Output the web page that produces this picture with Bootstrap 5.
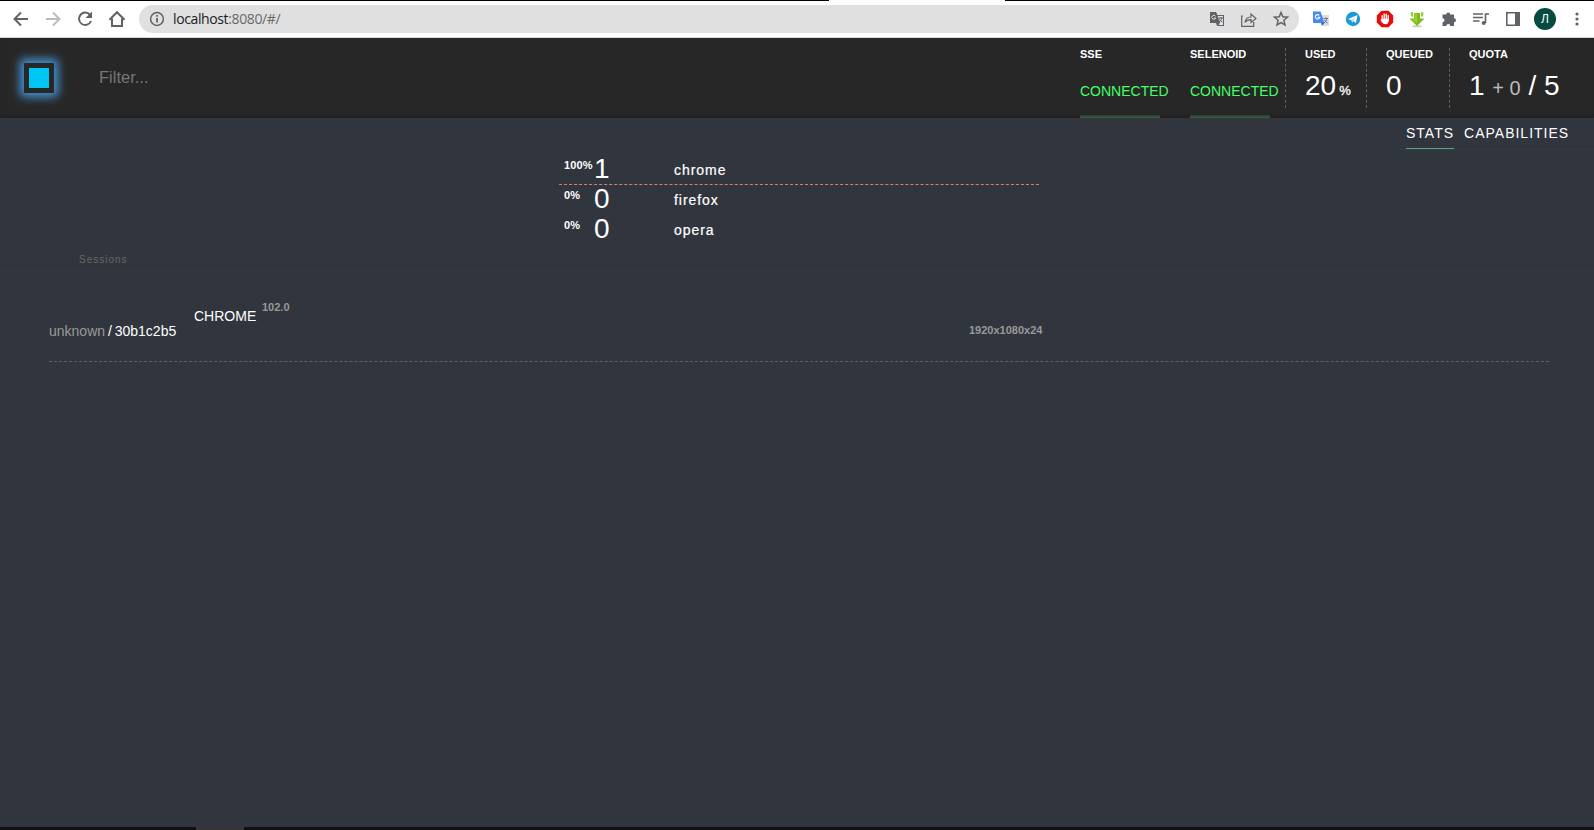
<!DOCTYPE html>
<html lang="en">
<head>
<meta charset="utf-8">
<title>Selenoid UI</title>
<link href="https://cdn.jsdelivr.net/npm/bootstrap@5.3.0/dist/css/bootstrap.min.css" rel="stylesheet">
<style>
body{height:830px;overflow:hidden;background:#31363e;color:#fff;font-family:"Liberation Sans",Arial,sans-serif;font-size:14px;line-height:1}
.tabstrip{height:1px;background:#000}
.tabstrip span{width:176px;height:1px;margin-left:829px;background:#fff}
.browserbar{height:37px;background:#fff;border-bottom:1px solid #d5d8da;color:#5f6368}
.browserbar svg{display:block;flex:none}
.navicons{width:139px;padding-left:12px;gap:14px}
.address{width:1160px;height:28px;background:#e0e0e0;padding:0 9px 0 9px}
.url{font-family:"Open Sans","Noto Sans",sans-serif;font-size:14px;letter-spacing:-.38px;margin-left:7px;color:#666a6e}
.url b{font-weight:400;color:#202124}
.exts{padding-left:13px;gap:14px}
.exts .tight{margin-left:-2px}
.topbar{height:80px;background:#272727;box-shadow:inset 0 -4px 4px -2px #202020}
.logo{width:30px;height:30px;margin-left:24px;border:5px solid #272727;background:#00c6f4;border-radius:1px;box-shadow:0 0 10px 4px #4596d8}
.filter{width:400px;margin:-2px 0 0 45px;padding:0;background:none;border:0;color:#fff;font-size:16.5px;line-height:20px}
.filter::placeholder{color:#777;opacity:1}
.cell{height:80px;padding-top:11px}
.cell h2{font-size:11px;line-height:11px;font-weight:700;margin:0}
.status{width:110px}
.status p{margin:23px 0 0;font-size:14px;line-height:16px;color:#4f6}
.status i{display:block;width:80px;height:3px;margin-top:16px;background:linear-gradient(#29402d,#3a6041)}
.figure-n{font-size:28px;line-height:32px;margin-top:10px;white-space:nowrap}
.percent{font-size:13px;margin-left:3px;-webkit-text-stroke:.3px #fff}
.pending{font-size:20px;color:#bbb}
.sep{height:60px;width:1px;margin-top:10px;border-left:1px dashed #5b6067}
.tabs{height:32px;border-bottom:1px solid #363b43;width:198px;padding-left:10px;gap:10px;letter-spacing:1px}
.tabs a{color:#fff;text-decoration:none;height:31px;line-height:31px;white-space:nowrap}
.tabs .on{border-bottom:1px solid #4fa87a}
.stats{width:480px;margin:5px 0 0 559px}
.stat{height:30px}
.stat small{width:30px;font-size:11px;line-height:11px;font-weight:700;margin:5px 0 0 5px;letter-spacing:.1px}
.stat span{width:80px;font-size:28px;line-height:28px}
.stat em{font-style:normal;letter-spacing:.95px;font-size:14px;line-height:31px;-webkit-text-stroke:.2px #fff}
.used{border-bottom:1px dashed #e57a6c}
.sessions{height:26px;padding:10px 0 0 79px;border-bottom:1px solid #363a42;color:#666;font-size:10px;line-height:10px;letter-spacing:1px}
.session{height:91px;width:1500px;margin-left:49px;border-bottom:1px dashed #5b6067}
.sid{width:145px;padding-top:53px;color:#999;word-spacing:-1px}
.sid b{font-weight:400;color:#fff}
.ver{font-size:11px;line-height:11px;font-weight:700;color:#999}
.taskbar{height:3px;background:#111}
.taskbar span{width:48px;height:3px;margin-left:196px;background:#363435}
</style>
</head>
<body class="d-flex flex-column">
<div class="tabstrip d-flex flex-shrink-0"><span></span></div>
<nav class="browserbar d-flex align-items-center flex-shrink-0">
  <div class="navicons d-flex align-items-center">
    <svg width="18" height="18" viewBox="0 0 18 18" fill="none" stroke="currentColor" stroke-width="2"><path d="M16 9H3M9 2.500 2.500 9 9 15.500"/></svg>
    <svg width="18" height="18" viewBox="0 0 18 18" fill="none" stroke="#b9bbbd" stroke-width="2"><path d="M2 9h13M9 2.500 15.500 9 9 15.500"/></svg>
    <svg width="18" height="18" viewBox="0 0 18 18" fill="none" stroke="currentColor" stroke-width="2"><path d="M14.300 5.200A6.200 6.200 0 1 0 15 11"/><path d="M16 1.500V8H9.500z" fill="currentColor" stroke="none"/></svg>
    <svg width="18" height="18" viewBox="0 0 18 18" fill="none" stroke="currentColor" stroke-width="2"><path d="M1.500 9.700 9 2.200l7.500 7.500M4 8.500V16h10V8.500"/></svg>
  </div>
  <div class="address rounded-pill d-flex align-items-center">
    <svg width="18" height="18" viewBox="0 0 18 18" fill="none" stroke="currentColor" stroke-width="1.500"><circle cx="9" cy="9" r="6.400"/><path d="M9 8v4.500M9 5v1.700" stroke-width="1.800"/></svg>
    <div class="url"><b>localhost</b>:8080/#/</div>
    <div class="d-flex ms-auto" style="gap:14px">
      <svg width="18" height="18" viewBox="0 0 18 18"><path d="M2 2h6l1.500 3H16v11H9l-1-3H2z" fill="#5f6368"/><path d="M9.700 6H15v9h-4.500l1.500-2.300z" fill="#e0e0e0"/><path d="M7.500 6.200A2 2 0 1 0 7.700 8H6" fill="none" stroke="#e0e0e0"/><path d="M10.500 8H15M12.800 7v1M14 8q-.8 2.500-3 4M11.500 9.500q1 1.800 3 2.500" fill="none" stroke="#5f6368"/></svg>
      <svg width="18" height="18" viewBox="0 0 18 18" fill="none" stroke="#5f6368" stroke-width="1.200"><path d="M3 6H1.700v10.300h12V12M5 12.500c.6-4 3-5.500 6-5.500V4l5 4.500-5 4v-2.800c-2.800 0-4.600.8-6 2.800z"/></svg>
      <svg width="18" height="18" viewBox="0 0 18 18" fill="none" stroke="#5f6368" stroke-width="1.500"><path d="m9 2.500 1.800 4.300 4.700.4-3.600 3.100 1.100 4.600L9 12.500l-4 2.400 1.100-4.600-3.600-3.100 4.700-.4z"/></svg>
    </div>
  </div>
  <div class="exts d-flex align-items-center">
    <svg width="18" height="18" viewBox="0 0 18 18"><path d="M7 5h10v11h-6z" fill="#ddd"/><path d="M1 1.500h7.500L12.500 13H2a1 1 0 0 1-1-1z" fill="#4688f4"/><path d="m9 13h3.500L10 16z" fill="#2f62c4"/><path d="M7.200 5.300A2.200 2.200 0 1 0 7.700 7.300H5.700" fill="none" stroke="#fff" stroke-width="1.200"/><path d="M11.500 8.500H16M13.700 7.500v1M15 8.500q-.8 3-3 4.500M12.500 10q1 2 3 3" fill="none" stroke="#678"/></svg>
    <svg width="18" height="18" viewBox="0 0 18 18"><circle cx="9" cy="9" r="7.200" fill="#1c9ad6"/><path d="m4 9 9.500-4-1.600 8-2.600-1.900L8 12.500l-.6-2.300z" fill="#fff"/><path d="m7.400 10.200 4-3.200-3 4z" fill="#8ac8e8"/></svg>
    <svg width="18" height="18" viewBox="0 0 18 18"><path d="M5.500.8h7l4.700 4.700v7l-4.700 4.700h-7L.8 12.500v-7z" fill="#e40d0d"/><path d="M6.200 10V5.700M8.200 9V4M10.200 9V4.200M12.200 10V5.500" stroke="#fff" stroke-width="1.300" stroke-linecap="round"/><path d="M5.500 8.800h7.300v2q-.5 3.500-3.300 3.500T4.500 10z" fill="#fff"/></svg>
    <svg width="18" height="18" viewBox="0 0 18 18"><ellipse cx="9" cy="16.300" rx="5" ry="1" fill="#ccc"/><path d="M6 3h6v5.500h4.500L9 16 1.500 8.500H6z" fill="#7fba1c"/><path d="M2.500 2.500 5 2v4.500H3zM15.500 2.500 13 2v4.500h2z" fill="#9aca3c"/><path d="M6.500 3.500H9v10l-5-4.500h2.500z" fill="#9bd02f"/></svg>
    <svg width="18" height="18" viewBox="0 0 18 18" fill="#5f6368"><path d="M2.500 4.500h3.700a2 2 0 1 1 4 0H14v3.700a2 2 0 1 1 0 4V16h-3.700a2 2 0 0 0-4 0H2.500v-3.700a2 2 0 0 0 0-4z"/></svg>
    <svg width="18" height="18" viewBox="0 0 18 18" fill="none" stroke="#5f6368" stroke-width="1.600"><path d="M1 4h10M1 7.500h10M1 11h6.500M13.500 13V4H17"/><circle cx="11.700" cy="13" r="2" fill="#5f6368" stroke="none"/></svg>
    <svg width="18" height="18" viewBox="0 0 18 18"><path d="M2 2h14v14H2zM3.600 3.600v10.800H11V3.600z" fill="#5f6368" fill-rule="evenodd"/></svg>
    <svg class="tight" width="22" height="22" viewBox="0 0 22 22"><circle cx="11" cy="11" r="11" fill="#064b40"/><text x="11" y="15" text-anchor="middle" font-family="Liberation Sans" font-size="12" fill="#fff">Л</text></svg>
    <svg class="tight" width="18" height="18" viewBox="0 0 18 18" fill="#5f6368"><circle cx="9" cy="4" r="1.600"/><circle cx="9" cy="9" r="1.600"/><circle cx="9" cy="14" r="1.600"/></svg>
  </div>
</nav>
<header class="topbar d-flex flex-shrink-0">
  <div class="d-flex align-items-center">
    <div class="logo"></div>
    <input class="filter" placeholder="Filter...">
  </div>
  <div class="d-flex ms-auto">
    <div class="cell status"><h2>SSE</h2><p>CONNECTED</p><i></i></div>
    <div class="cell status" style="width:95px"><h2>SELENOID</h2><p>CONNECTED</p><i></i></div>
    <div class="sep"></div>
    <div class="cell" style="width:80px;padding-left:19px"><h2>USED</h2><div class="figure-n">20<span class="percent">%</span></div></div>
    <div class="sep"></div>
    <div class="cell" style="width:82px;padding-left:19px"><h2>QUEUED</h2><div class="figure-n">0</div></div>
    <div class="sep"></div>
    <div class="cell" style="width:144px;padding-left:19px"><h2>QUOTA</h2><div class="figure-n">1 <span class="pending">+ 0</span> / 5</div></div>
  </div>
</header>
<main class="flex-grow-1">
  <div class="tabs d-flex ms-auto"><a class="on">STATS</a><a>CAPABILITIES</a></div>
  <div class="stats">
    <div class="stat used d-flex"><small>100%</small><span>1</span><em>chrome</em></div>
    <div class="stat d-flex"><small>0%</small><span>0</span><em>firefox</em></div>
    <div class="stat d-flex"><small>0%</small><span>0</span><em>opera</em></div>
  </div>
  <div class="sessions">Sessions</div>
  <div class="session d-flex">
    <div class="sid">unknown <b>/ 30b1c2b5</b></div>
    <div style="width:68px;padding-top:38px">CHROME</div>
    <div class="ver" style="width:707px;padding-top:31px">102.0</div>
    <div class="ver" style="padding-top:54px">1920x1080x24</div>
  </div>
</main>
<footer class="taskbar d-flex flex-shrink-0"><span></span></footer>
<script src="https://cdn.jsdelivr.net/npm/bootstrap@5.3.0/dist/js/bootstrap.bundle.min.js"></script>
</body>
</html>
